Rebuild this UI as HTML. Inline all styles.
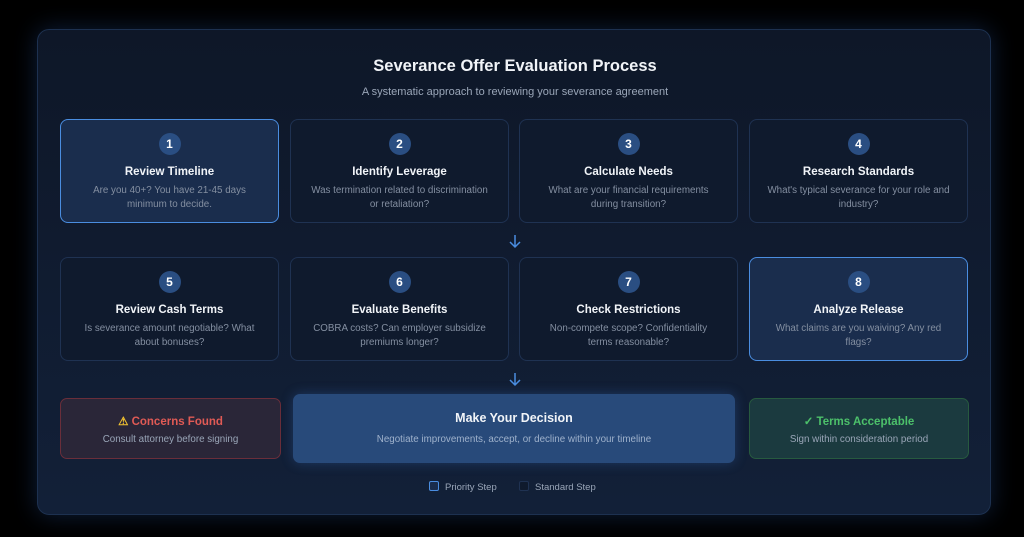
<!DOCTYPE html>
<html><head><meta charset="utf-8"><style>
*{box-sizing:border-box;margin:0;padding:0}
body{width:1024px;height:537px;background:#000;font-family:"Liberation Sans",sans-serif;position:relative;overflow:hidden}
.wrap{position:absolute;left:37px;top:29px;width:954px;height:486px;border-radius:12px;background:linear-gradient(180deg,#0e1728 0%,#122038 100%);border:1px solid #1d3150;box-shadow:0 0 24px rgba(40,90,170,.35)}
h1{position:absolute;left:0;width:954px;top:27px;text-align:center;color:#f1f4f8;font-size:16.5px;font-weight:bold}
.sub{position:absolute;left:0;width:954px;top:56px;text-align:center;color:#9aa6b8;font-size:11px}
.card{position:absolute;width:219px;height:104px;border:1px solid #1f3252;border-radius:8px;background:#0f1a2d;text-align:center}
.card.p{background:#1a2d4d;border:1.5px solid #4a8de0}
.n{width:22px;height:22px;border-radius:50%;background:#2a4e82;color:#fff;font-size:12px;font-weight:bold;line-height:22px;margin:13px auto 0}
.t{color:#f1f4f8;font-size:11.5px;font-weight:bold;margin-top:11px}
.d{color:#848fa1;font-size:9.8px;line-height:14px;margin-top:6px;padding:0 16px}
.arr{position:absolute;left:469px;width:16px}
.box{position:absolute;border-radius:7px;text-align:center}
.lg{position:absolute;top:451px;font-size:9.5px;color:#9aa6b8}
.sq{display:inline-block;width:10px;height:10px;border-radius:2px;vertical-align:-1px;margin-right:6px}
</style></head><body>
<div class="wrap">
<h1>Severance Offer Evaluation Process</h1>
<div class="sub">A systematic approach to reviewing your severance agreement</div>

<div class="card p" style="left:22px;top:89px"><div class="n">1</div><div class="t">Review Timeline</div><div class="d">Are you 40+? You have 21-45 days minimum to decide.</div></div>
<div class="card" style="left:252px;top:89px"><div class="n">2</div><div class="t">Identify Leverage</div><div class="d">Was termination related to discrimination or retaliation?</div></div>
<div class="card" style="left:481px;top:89px"><div class="n">3</div><div class="t">Calculate Needs</div><div class="d">What are your financial requirements during transition?</div></div>
<div class="card" style="left:711px;top:89px"><div class="n">4</div><div class="t">Research Standards</div><div class="d">What's typical severance for your role and industry?</div></div>

<svg class="arr" style="top:203px" width="16" height="16" viewBox="0 0 16 16"><path d="M8 2V14M3 9L8 14L13 9" fill="none" stroke="#4a8de0" stroke-width="1.5"/></svg>

<div class="card" style="left:22px;top:227px"><div class="n">5</div><div class="t">Review Cash Terms</div><div class="d">Is severance amount negotiable? What about bonuses?</div></div>
<div class="card" style="left:252px;top:227px"><div class="n">6</div><div class="t">Evaluate Benefits</div><div class="d">COBRA costs? Can employer subsidize premiums longer?</div></div>
<div class="card" style="left:481px;top:227px"><div class="n">7</div><div class="t">Check Restrictions</div><div class="d">Non-compete scope? Confidentiality<br>terms reasonable?</div></div>
<div class="card p" style="left:711px;top:227px"><div class="n">8</div><div class="t">Analyze Release</div><div class="d">What claims are you waiving? Any red flags?</div></div>

<svg class="arr" style="top:341px" width="16" height="16" viewBox="0 0 16 16"><path d="M8 2V14M3 9L8 14L13 9" fill="none" stroke="#4a8de0" stroke-width="1.5"/></svg>

<div class="box" style="left:22px;top:368px;width:221px;height:61px;background:#2a2638;border:1px solid #6a2e3a">
<div style="color:#e05a55;font-size:11.5px;font-weight:bold;margin-top:15px"><span style="color:#f2c230">⚠</span> Concerns Found</div>
<div style="color:#9aa6b8;font-size:9.8px;margin-top:6px">Consult attorney before signing</div></div>

<div class="box" style="left:255px;top:364px;width:442px;height:69px;background:#284a7a;box-shadow:0 0 12px rgba(60,120,210,.3)">
<div style="color:#f1f4f8;font-size:12.5px;font-weight:bold;margin-top:17px">Make Your Decision</div>
<div style="color:#9fb2cc;font-size:9.8px;margin-top:9px">Negotiate improvements, accept, or decline within your timeline</div></div>

<div class="box" style="left:711px;top:368px;width:220px;height:61px;background:#1b3a3f;border:1px solid #275a3f">
<div style="color:#4cc06a;font-size:11.5px;font-weight:bold;margin-top:15px">✓ Terms Acceptable</div>
<div style="color:#9aa6b8;font-size:9.8px;margin-top:6px">Sign within consideration period</div></div>

<div class="lg" style="left:391px"><span class="sq" style="border:1.5px solid #4a8de0;background:#1a2d4d"></span>Priority Step</div>
<div class="lg" style="left:481px"><span class="sq" style="border:1px solid #1f3252;background:#0f1a2d"></span>Standard Step</div>
</div>
</body></html>
